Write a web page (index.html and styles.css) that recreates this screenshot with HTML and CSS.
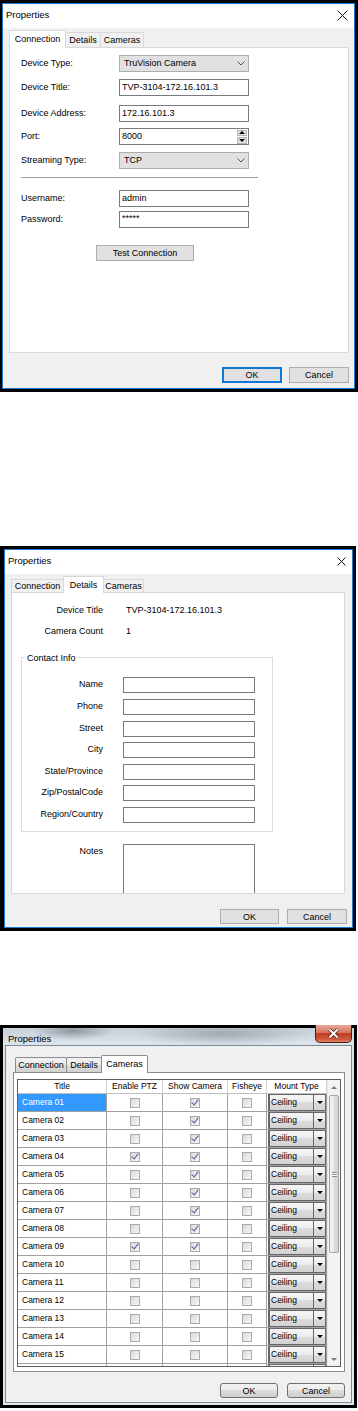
FILE: index.html
```html
<!DOCTYPE html>
<html lang="en">
<head>
<meta charset="utf-8">
<title>Properties</title>
<link rel="stylesheet" href="styles.css">
</head>
<body>
<main class="page">

<!-- Dialog 1: Connection tab (Windows 10) -->
<section class="shot shot-conn">
  <div class="win10">
    <div class="titlebar">
      <span class="title">Properties</span>
      <svg class="xclose" width="11" height="11" viewBox="0 0 11 11"><path d="M0.5 0.5L10.5 10.5M10.5 0.5L0.5 10.5" stroke="#111" stroke-width="1" fill="none"/></svg>
    </div>
    <div class="client">
      <div class="tabs">
        <div class="tab active t1-conn">Connection</div>
        <div class="tab t1-det">Details</div>
        <div class="tab t1-cam">Cameras</div>
      </div>
      <div class="panel conn-panel">
        <div class="frow"><span class="flabel">Device Type:</span><div class="combo"><span>TruVision Camera</span><svg width="8" height="5" viewBox="0 0 8 5"><path d="M0.5 0.5L4 4L7.5 0.5" fill="none" stroke="#555"/></svg></div></div>
        <div class="frow"><span class="flabel">Device Title:</span><div class="tb">TVP-3104-172.16.101.3</div></div>
        <div class="frow gap9"><span class="flabel">Device Address:</span><div class="tb">172.16.101.3</div></div>
        <div class="frow gap6"><span class="flabel">Port:</span><div class="tb"><span>8000</span><div class="spin"><span class="spin-btn"><i class="tri-up"></i></span><span class="spin-btn"><i class="tri-down"></i></span></div></div></div>
        <div class="frow"><span class="flabel">Streaming Type:</span><div class="combo"><span>TCP</span><svg width="8" height="5" viewBox="0 0 8 5"><path d="M0.5 0.5L4 4L7.5 0.5" fill="none" stroke="#555"/></svg></div></div>
        <hr class="sep">
        <div class="frow"><span class="flabel">Username:</span><div class="tb">admin</div></div>
        <div class="frow gap4"><span class="flabel">Password:</span><div class="tb pw">*****</div></div>
        <button class="btn test">Test Connection</button>
      </div>
      <div class="buttons">
        <button class="btn def">OK</button>
        <button class="btn">Cancel</button>
      </div>
    </div>
  </div>
</section>

<!-- Dialog 2: Details tab (Windows 10) -->
<section class="shot shot-det">
  <div class="win10">
    <div class="titlebar">
      <span class="title">Properties</span>
      <svg class="xclose" width="9" height="9" viewBox="0 0 9 9"><path d="M0.5 0.5L8.5 8.5M8.5 0.5L0.5 8.5" stroke="#111" stroke-width="1" fill="none"/></svg>
    </div>
    <div class="client det-client">
      <div class="tabs">
        <div class="tab t2-conn">Connection</div>
        <div class="tab active t2-det">Details</div>
        <div class="tab t2-cam">Cameras</div>
      </div>
      <div class="panel det-panel">
        <div class="drow"><span class="dlabel">Device Title</span><span>TVP-3104-172.16.101.3</span></div>
        <div class="drow gap10"><span class="dlabel">Camera Count</span><span>1</span></div>
        <fieldset class="contact">
          <legend>Contact Info</legend>
          <div class="crow"><span class="clabel">Name</span><div class="ctb"></div></div>
          <div class="crow"><span class="clabel">Phone</span><div class="ctb"></div></div>
          <div class="crow"><span class="clabel">Street</span><div class="ctb"></div></div>
          <div class="crow g5"><span class="clabel">City</span><div class="ctb"></div></div>
          <div class="crow"><span class="clabel">State/Province</span><div class="ctb"></div></div>
          <div class="crow g5"><span class="clabel">Zip/PostalCode</span><div class="ctb"></div></div>
          <div class="crow"><span class="clabel">Region/Country</span><div class="ctb"></div></div>
        </fieldset>
        <div class="nrow"><span class="nlabel">Notes</span><div class="notes"></div></div>
      </div>
      <div class="buttons det-buttons">
        <button class="btn">OK</button>
        <button class="btn">Cancel</button>
      </div>
    </div>
  </div>
</section>

<!-- Dialog 3: Cameras tab (Windows 7) -->
<section class="shot shot-cam">
  <div class="w7frame">
    <div class="w7title">
      <span class="w7caption">Properties</span>
      <div class="w7close"><svg width="13" height="11" viewBox="0 0 13 11"><path d="M2.5 1.5L10.5 9.5M10.5 1.5L2.5 9.5" stroke="#4a1a12" stroke-width="3.4" fill="none"/><path d="M2.5 1.5L10.5 9.5M10.5 1.5L2.5 9.5" stroke="#fff" stroke-width="2" fill="none"/></svg></div>
    </div>
    <div class="w7client">
      <div class="w7tabs">
        <div class="w7tab t3-conn">Connection</div>
        <div class="w7tab t3-det">Details</div>
        <div class="w7tab active t3-cam">Cameras</div>
      </div>
      <div class="w7panel">
        <div class="grid">
          <div class="gtable">
            <div class="grow ghead"><span>Title</span><span>Enable PTZ</span><span>Show Camera</span><span>Fisheye</span><span>Mount Type</span></div>
            <div class="grow sel"><span class="gt">Camera 01</span><span><i class="cb"></i></span><span><i class="cb on"></i></span><span><i class="cb"></i></span><span class="gm"><span class="mc"><span class="mc-text">Ceiling</span><span class="mc-btn"><i class="tri-down"></i></span></span></span></div>
            <div class="grow"><span class="gt">Camera 02</span><span><i class="cb"></i></span><span><i class="cb on"></i></span><span><i class="cb"></i></span><span class="gm"><span class="mc"><span class="mc-text">Ceiling</span><span class="mc-btn"><i class="tri-down"></i></span></span></span></div>
            <div class="grow"><span class="gt">Camera 03</span><span><i class="cb"></i></span><span><i class="cb on"></i></span><span><i class="cb"></i></span><span class="gm"><span class="mc"><span class="mc-text">Ceiling</span><span class="mc-btn"><i class="tri-down"></i></span></span></span></div>
            <div class="grow"><span class="gt">Camera 04</span><span><i class="cb on"></i></span><span><i class="cb on"></i></span><span><i class="cb"></i></span><span class="gm"><span class="mc"><span class="mc-text">Ceiling</span><span class="mc-btn"><i class="tri-down"></i></span></span></span></div>
            <div class="grow"><span class="gt">Camera 05</span><span><i class="cb"></i></span><span><i class="cb on"></i></span><span><i class="cb"></i></span><span class="gm"><span class="mc"><span class="mc-text">Ceiling</span><span class="mc-btn"><i class="tri-down"></i></span></span></span></div>
            <div class="grow"><span class="gt">Camera 06</span><span><i class="cb"></i></span><span><i class="cb on"></i></span><span><i class="cb"></i></span><span class="gm"><span class="mc"><span class="mc-text">Ceiling</span><span class="mc-btn"><i class="tri-down"></i></span></span></span></div>
            <div class="grow"><span class="gt">Camera 07</span><span><i class="cb"></i></span><span><i class="cb on"></i></span><span><i class="cb"></i></span><span class="gm"><span class="mc"><span class="mc-text">Ceiling</span><span class="mc-btn"><i class="tri-down"></i></span></span></span></div>
            <div class="grow"><span class="gt">Camera 08</span><span><i class="cb"></i></span><span><i class="cb on"></i></span><span><i class="cb"></i></span><span class="gm"><span class="mc"><span class="mc-text">Ceiling</span><span class="mc-btn"><i class="tri-down"></i></span></span></span></div>
            <div class="grow"><span class="gt">Camera 09</span><span><i class="cb on"></i></span><span><i class="cb on"></i></span><span><i class="cb"></i></span><span class="gm"><span class="mc"><span class="mc-text">Ceiling</span><span class="mc-btn"><i class="tri-down"></i></span></span></span></div>
            <div class="grow"><span class="gt">Camera 10</span><span><i class="cb"></i></span><span><i class="cb"></i></span><span><i class="cb"></i></span><span class="gm"><span class="mc"><span class="mc-text">Ceiling</span><span class="mc-btn"><i class="tri-down"></i></span></span></span></div>
            <div class="grow"><span class="gt">Camera 11</span><span><i class="cb"></i></span><span><i class="cb"></i></span><span><i class="cb"></i></span><span class="gm"><span class="mc"><span class="mc-text">Ceiling</span><span class="mc-btn"><i class="tri-down"></i></span></span></span></div>
            <div class="grow"><span class="gt">Camera 12</span><span><i class="cb"></i></span><span><i class="cb"></i></span><span><i class="cb"></i></span><span class="gm"><span class="mc"><span class="mc-text">Ceiling</span><span class="mc-btn"><i class="tri-down"></i></span></span></span></div>
            <div class="grow"><span class="gt">Camera 13</span><span><i class="cb"></i></span><span><i class="cb"></i></span><span><i class="cb"></i></span><span class="gm"><span class="mc"><span class="mc-text">Ceiling</span><span class="mc-btn"><i class="tri-down"></i></span></span></span></div>
            <div class="grow"><span class="gt">Camera 14</span><span><i class="cb"></i></span><span><i class="cb"></i></span><span><i class="cb"></i></span><span class="gm"><span class="mc"><span class="mc-text">Ceiling</span><span class="mc-btn"><i class="tri-down"></i></span></span></span></div>
            <div class="grow"><span class="gt">Camera 15</span><span><i class="cb"></i></span><span><i class="cb"></i></span><span><i class="cb"></i></span><span class="gm"><span class="mc"><span class="mc-text">Ceiling</span><span class="mc-btn"><i class="tri-down"></i></span></span></span></div>
            <div class="grow"><span class="gt"></span><span></span><span></span><span></span><span class="gm"><span class="mc"><span class="mc-text"></span><span class="mc-btn"></span></span></span></div>
          </div>
          <div class="vs">
            <span class="vs-arrow"><i class="tri-up gray"></i></span>
            <span class="vs-thumb"><i class="grip"></i></span>
            <span class="vs-track"></span>
            <span class="vs-arrow"><i class="tri-down gray"></i></span>
          </div>
        </div>
      </div>
      <div class="w7btns">
        <button class="w7btn">OK</button>
        <button class="w7btn">Cancel</button>
      </div>
    </div>
  </div>
</section>

</main>
</body>
</html>
```

FILE: styles.css
```css
* { box-sizing: border-box; }
html, body { margin: 0; background: #fff; }
body {
  font-family: "Liberation Sans", Arial, sans-serif;
  font-size: 9px;
  line-height: 1.2;
  color: #000;
}
.page { display: flex; flex-direction: column; width: 358px; }

/* ---------- screenshots ---------- */
.shot { border-style: solid; border-color: #000; flex: none; }
.shot-conn { width: 358px; height: 392px; border-width: 3px 3px 3px 2px; }
.shot-det { width: 356px; height: 385px; margin-top: 154px; border-width: 3px 3px 3px 4px; }
.shot-cam { width: 357px; height: 383px; margin-top: 94px; border-width: 3px; }

/* ---------- Windows 10 dialog ---------- */
.win10 {
  height: 100%;
  display: flex;
  flex-direction: column;
  border: 1px solid #1c7bd1;
  background: #f0f0f0;
}
.titlebar {
  flex: none;
  height: 24px;
  background: #fff;
  display: flex;
  align-items: center;
  justify-content: space-between;
  padding: 0 6px 2px 3px;
}
.title { font-size: 9.5px; }
.client {
  flex: 1;
  display: flex;
  flex-direction: column;
  padding: 2px 5px 0 6px;
}
.tabs {
  display: flex;
  align-items: flex-end;
  margin-bottom: -1px;
  position: relative;
  z-index: 1;
}
.tab {
  height: 15px;
  margin-bottom: 1px;
  border: 1px solid #d9d9d9;
  border-bottom: none;
  background: #f0f0f0;
  display: flex;
  align-items: center;
  justify-content: center;
}
.tab + .tab { margin-left: -1px; }
.tab.active { height: 18px; margin-bottom: 0; background: #fff; }
.t1-conn { width: 57px; }
.t1-det { width: 36px; }
.t1-cam { width: 44px; }

.panel { flex: none; background: #fff; border: 1px solid #d9d9d9; }
.conn-panel {
  height: 306px;
  padding: 7px 0 0 11px;
  display: flex;
  flex-direction: column;
  align-items: flex-start;
}
.frow { display: flex; align-items: center; height: 17px; margin-top: 7px; }
.frow:first-child { margin-top: 0; }
.frow.gap9 { margin-top: 9px; }
.frow.gap6 { margin-top: 6px; }
.frow.gap4 { margin-top: 4px; }
.flabel { width: 98px; }
.tb {
  width: 130px;
  height: 17px;
  border: 1px solid #7a7a7a;
  background: #fff;
  display: flex;
  align-items: center;
  padding-left: 2px;
}
.tb.pw { align-items: flex-start; padding-top: 1px; }
.combo {
  width: 130px;
  height: 17px;
  border: 1px solid #adadad;
  background: #e1e1e1;
  display: flex;
  align-items: center;
  justify-content: space-between;
  padding: 0 3px 0 4px;
}
.spin {
  margin-left: auto;
  margin-right: 1px;
  width: 10px;
  height: 14px;
  display: flex;
  flex-direction: column;
  gap: 1px;
}
.spin-btn {
  flex: 1;
  background: #e3e3e3;
  border: 1px solid #b4b4b4;
  display: flex;
  align-items: center;
  justify-content: center;
}
.tri-up, .tri-down { display: block; width: 0; height: 0; border-left: 3px solid transparent; border-right: 3px solid transparent; }
.tri-up { border-bottom: 3px solid #000; }
.tri-down { border-top: 3px solid #000; }
.tri-up.gray { border-bottom-color: #7a7a7a; }
.tri-down.gray { border-top-color: #7a7a7a; }

.sep {
  width: 237px;
  height: 0;
  margin: 8px 0 12px;
  border: 0;
  border-top: 1px solid #a0a0a0;
}
.sep + .frow { margin-top: 0; }

.btn {
  font-family: inherit;
  font-size: 9px;
  color: #000;
  height: 16px;
  padding: 0;
  border: 1px solid #adadad;
  background: #e1e1e1;
}
.btn.test { width: 98px; margin: 17px 0 0 75px; }
.buttons { display: flex; justify-content: flex-end; gap: 7px; margin-top: 14px; }
.buttons .btn { width: 60px; }
.btn.def { border: 2px solid #0f78d4; }

/* ---------- Details dialog ---------- */
.det-client { padding: 2px 7px 0 6px; }
.det-client .tab { height: 13px; }
.det-client .tab.active { height: 17px; }
.t2-conn { width: 53px; }
.t2-det { width: 41px; }
.t2-cam { width: 41px; }
.det-panel {
  height: 302px;
  padding-top: 12px;
  overflow: hidden;
  display: flex;
  flex-direction: column;
  align-items: flex-start;
}
.drow { display: flex; align-items: center; height: 14px; }
.drow.gap10 { margin-top: 10px; }
.dlabel { width: 91px; text-align: right; margin-right: 23px; }
.contact {
  margin: 15px 0 0 9px;
  width: 252px;
  min-width: 0;
  border: 1px solid #dcdcdc;
  padding: 13px 0 8px 0;
}
.contact legend {
  margin-left: 3px;
  padding: 0 2px;
  line-height: 12px;
}
.crow { display: flex; align-items: center; height: 16px; margin-top: 6px; }
.crow:first-of-type { margin-top: 0; }
.crow.g5 { margin-top: 5px; }
.clabel { width: 81px; text-align: right; margin-right: 20px; }
.ctb { width: 132px; height: 16px; border: 1px solid #7a7a7a; background: #fff; }
.nrow { display: flex; align-items: flex-start; margin-top: 12px; }
.nlabel { width: 91px; text-align: right; margin-right: 20px; padding-top: 2px; }
.notes { width: 132px; height: 60px; border: 1px solid #7a7a7a; background: #fff; }
.det-buttons { margin-top: 15px; gap: 8px; margin-right: -2px; }
.det-buttons .btn { height: 15px; }
.det-buttons .btn:first-child { width: 59px; }

/* ---------- Windows 7 dialog ---------- */
.w7frame {
  height: 100%;
  display: flex;
  flex-direction: column;
  padding: 0 2px 2px;
  background:
    radial-gradient(ellipse 40px 9px at 70px 3px, rgba(70, 78, 88, 0.45), rgba(70, 78, 88, 0)),
    radial-gradient(ellipse 90px 12px at 220px 6px, rgba(95, 105, 115, 0.4), rgba(95, 105, 115, 0)),
    linear-gradient(#c6d0d9, #dce3ea 16px, #e4e9ee);
}
.w7title {
  flex: none;
  height: 17px;
  display: flex;
  align-items: flex-start;
  justify-content: space-between;
  padding-left: 3px;
}
.w7caption { margin-top: 5px; font-size: 9.5px; }
.w7close {
  width: 37px;
  height: 18px;
  margin-top: -3px;
  border: 1px solid #4d1d13;
  border-top: none;
  border-radius: 0 0 5px 5px;
  background: linear-gradient(#e9a898, #d6745e 45%, #c13c22 50%, #cf5a3f 85%, #e08a6c);
  display: flex;
  align-items: center;
  justify-content: center;
}
.w7client {
  flex: 1;
  display: flex;
  flex-direction: column;
  background: #f0f0f0;
  border: 1px solid #7d8b98;
  padding: 9px 6px 0 7px;
}
.w7tabs {
  display: flex;
  align-items: flex-end;
  padding-left: 2px;
  margin-bottom: -1px;
  position: relative;
  z-index: 1;
}
.w7tab {
  height: 15px;
  margin-bottom: 1px;
  border: 1px solid #898c95;
  border-bottom: none;
  border-radius: 2px 2px 0 0;
  background: linear-gradient(#f3f3f3, #ebebeb 50%, #dedede 50%, #d2d2d2);
  display: flex;
  align-items: center;
  justify-content: center;
}
.w7tab + .w7tab { margin-left: -1px; }
.w7tab.active { height: 18px; margin-bottom: 0; background: #fff; }
.t3-conn { width: 52px; }
.t3-det { width: 36px; }
.t3-cam { width: 47px; }

.w7panel {
  flex: none;
  height: 300px;
  background: #fff;
  border: 1px solid #898c95;
  padding: 6px 3px 4px;
}
.grid {
  height: 288px;
  border: 1px solid #5e5e5e;
  display: flex;
  overflow: hidden;
  background: #fff;
  font-size: 8.5px;
}
.gtable { width: 309px; flex: none; display: flex; flex-direction: column; }
.grow {
  flex: none;
  display: grid;
  grid-template-columns: 89px 56px 65px 39px 60px;
  height: 18px;
}
.grow > span {
  border-right: 1px solid #a0a0a0;
  border-bottom: 1px solid #a0a0a0;
  display: flex;
  align-items: center;
  justify-content: center;
  overflow: hidden;
  white-space: nowrap;
}
.ghead { height: 14px; }
.ghead > span { border-right-color: #d5d5d5; border-bottom-color: #c0c0c0; }
.grow > .gt { justify-content: flex-start; padding-left: 4px; }
.grow.sel > .gt { background: #3399ff; color: #fff; }
.grow > .gm { justify-content: flex-start; padding-left: 1px; }
.mc {
  display: flex;
  width: 58px;
  height: 17px;
  border: 1px solid #666;
  border-left-width: 2px;
}
.mc-text {
  flex: 1;
  display: flex;
  align-items: center;
  padding-left: 1px;
  background: linear-gradient(#f6f6f6, #ececec 50%, #dcdcdc 50%, #d3d3d3);
}
.mc-btn {
  width: 12px;
  border-left: 1px solid #666;
  background: linear-gradient(#f6f6f6, #ececec 50%, #dcdcdc 50%, #d3d3d3);
  display: flex;
  align-items: center;
  justify-content: center;
}
.cb {
  display: flex;
  align-items: center;
  justify-content: center;
  width: 10px;
  height: 10px;
  border: 1px solid #ababab;
  background: linear-gradient(135deg, #d9d9d9, #f7f7f7);
}
.cb.on::after {
  content: "";
  width: 3px;
  height: 6px;
  margin-top: -2px;
  border: solid #55639f;
  border-width: 0 1.5px 1.5px 0;
  transform: rotate(38deg);
}

.vs {
  width: 13px;
  flex: none;
  display: flex;
  flex-direction: column;
  background: #f3f3f3;
  border-left: 1px solid #e6e6e6;
}
.vs-arrow {
  flex: none;
  height: 14px;
  display: flex;
  align-items: center;
  justify-content: center;
}
.vs-thumb {
  flex: none;
  height: 158px;
  margin: 1px 1px 0;
  border: 1px solid #a3a3a3;
  border-radius: 2px;
  background: linear-gradient(90deg, #f4f4f4, #e8e8e8 50%, #dadada 50%, #d6d6d6);
  display: flex;
  align-items: center;
  justify-content: center;
}
.grip {
  width: 5px;
  height: 5px;
  border-top: 1px solid #8a8a8a;
  border-bottom: 1px solid #8a8a8a;
  background: linear-gradient(#fff 0 1px, #8a8a8a 1px 2px, transparent 2px);
  background-size: 100% 2px;
}
.vs-track { flex: 1; }

.w7btns { display: flex; justify-content: flex-end; gap: 9px; margin-top: 11px; }
.w7btn {
  width: 58px;
  height: 15px;
  padding: 0;
  font-family: inherit;
  font-size: 9px;
  color: #000;
  border: 1px solid #707070;
  border-radius: 3px;
  background: linear-gradient(#f2f2f2, #ebebeb 50%, #dddddd 50%, #cfcfcf);
}
```
